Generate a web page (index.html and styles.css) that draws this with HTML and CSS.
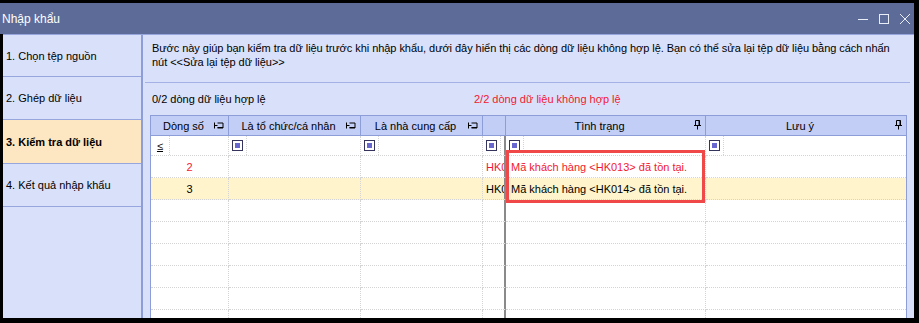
FILE: index.html
```html
<!DOCTYPE html>
<html lang="vi">
<head>
  <meta charset="UTF-8">
  <title>Nhập khẩu</title>
  <link rel="stylesheet" href="styles.css">
</head>
<body>
  <div class="window">
    <div class="titlebar">
      <span class="title">Nhập khẩu</span>
      <div class="controls">
        <svg width="12" height="12" viewBox="0 0 12 12"><path d="M1 6.5h10" stroke="#e9edf7" stroke-width="1"/></svg>
        <svg width="12" height="12" viewBox="0 0 12 12"><rect x="1.5" y="1.5" width="9" height="9" fill="none" stroke="#e9edf7" stroke-width="1"/></svg>
        <svg width="12" height="12" viewBox="0 0 12 12"><path d="M1 1l10 10M11 1L1 11" stroke="#e9edf7" stroke-width="1"/></svg>
      </div>
    </div>

    <div class="main">
      <div class="steps">
        <div class="step first">1. Chọn tệp nguồn</div>
        <div class="step">2. Ghép dữ liệu</div>
        <div class="step active">3. Kiểm tra dữ liệu</div>
        <div class="step">4. Kết quả nhập khẩu</div>
      </div>

      <div class="content">
        <p class="intro">Bước này giúp bạn kiểm tra dữ liệu trước khi nhập khẩu, dưới đây hiển thị các dòng dữ liệu không hợp lệ. Bạn có thể sửa lại tệp dữ liệu bằng cách nhấn nút &lt;&lt;Sửa lại tệp dữ liệu&gt;&gt;</p>
        <div class="divider"></div>
        <div class="counts">
          <span class="valid">0/2 dòng dữ liệu hợp lệ</span>
          <span class="invalid">2/2 dòng dữ liệu không hợp lệ</span>
        </div>

        <div class="grid">
          <div class="row head">
            <div class="hcell">Dòng số <svg class="pin" width="10" height="7" viewBox="0 0 10 7"><path d="M0.5 0.5v6M0.5 3.5h3M3.5 1h5.5v5h-5.5M3.5 5.5h5.5" fill="none" stroke="#000" stroke-width="1"/></svg></div>
            <div class="hcell">Là tổ chức/cá nhân <svg class="pin" width="10" height="7" viewBox="0 0 10 7"><path d="M0.5 0.5v6M0.5 3.5h3M3.5 1h5.5v5h-5.5M3.5 5.5h5.5" fill="none" stroke="#000" stroke-width="1"/></svg></div>
            <div class="hcell">Là nhà cung cấp <svg class="pin" width="10" height="7" viewBox="0 0 10 7"><path d="M0.5 0.5v6M0.5 3.5h3M3.5 1h5.5v5h-5.5M3.5 5.5h5.5" fill="none" stroke="#000" stroke-width="1"/></svg></div>
            <div class="hcell"></div>
            <div class="hcell">Tình trạng <svg class="pin" width="7" height="10" viewBox="0 0 7 10"><path d="M1.5 0.5h4v5M1.5 0.5v5M5 0.5v5M0 5.5h7M3.5 5.5v4" fill="none" stroke="#000" stroke-width="1"/></svg></div>
            <div class="hcell">Lưu ý <svg class="pin" width="7" height="10" viewBox="0 0 7 10"><path d="M1.5 0.5h4v5M1.5 0.5v5M5 0.5v5M0 5.5h7M3.5 5.5v4" fill="none" stroke="#000" stroke-width="1"/></svg></div>
          </div>

          <div class="row filter">
            <div class="cell"><span class="op le">≤</span></div>
            <div class="cell"><span class="op"><i class="chk"></i></span></div>
            <div class="cell"><span class="op"><i class="chk"></i></span></div>
            <div class="cell fixed"><span class="op"><i class="chk"></i></span></div>
            <div class="cell"><span class="op"><i class="chk"></i></span></div>
            <div class="cell"><span class="op"><i class="chk"></i></span></div>
          </div>

          <div class="row error">
            <div class="cell num">2</div>
            <div class="cell"></div>
            <div class="cell"></div>
            <div class="cell fixed clip">HK0</div>
            <div class="cell text">Mã khách hàng &lt;HK013&gt; đã tồn tại.</div>
            <div class="cell"></div>
          </div>

          <div class="row selected">
            <div class="cell num">3</div>
            <div class="cell"></div>
            <div class="cell"></div>
            <div class="cell fixed clip">HK0</div>
            <div class="cell text">Mã khách hàng &lt;HK014&gt; đã tồn tại.</div>
            <div class="cell"></div>
          </div>

          <div class="row"><div class="cell"></div><div class="cell"></div><div class="cell"></div><div class="cell fixed"></div><div class="cell"></div><div class="cell"></div></div>
          <div class="row"><div class="cell"></div><div class="cell"></div><div class="cell"></div><div class="cell fixed"></div><div class="cell"></div><div class="cell"></div></div>
          <div class="row"><div class="cell"></div><div class="cell"></div><div class="cell"></div><div class="cell fixed"></div><div class="cell"></div><div class="cell"></div></div>
          <div class="row"><div class="cell"></div><div class="cell"></div><div class="cell"></div><div class="cell fixed"></div><div class="cell"></div><div class="cell"></div></div>
          <div class="row"><div class="cell"></div><div class="cell"></div><div class="cell"></div><div class="cell fixed"></div><div class="cell"></div><div class="cell"></div></div>
          <div class="row"><div class="cell"></div><div class="cell"></div><div class="cell"></div><div class="cell fixed"></div><div class="cell"></div><div class="cell"></div></div>

          <div class="mark"></div>
        </div>
      </div>
    </div>
  </div>
</body>
</html>
```

FILE: styles.css
```css
body {
  margin: 0;
  background: #000;
  font-family: "Liberation Sans", Arial, sans-serif;
  font-size: 11px;
  color: #000;
}
.window {
  width: 914px;
  height: 315px;
  margin-top: 3px;
  overflow: hidden;
}
.titlebar {
  height: 31px;
  background: #5c6b98;
  display: flex;
  align-items: center;
  justify-content: space-between;
}
.title {
  color: #fff;
  font-size: 12px;
  padding-left: 2px;
}
.controls {
  display: flex;
  gap: 9px;
  padding-right: 3px;
}
.main {
  display: flex;
  height: 284px;
  margin-left: 3px;
  border-top: 1px solid #97a7dd;
  background: #d9e1fa;
}
.steps {
  width: 138px;
  border-right: 2px solid #8c9dd7;
}
.step {
  height: 42px;
  border-bottom: 1px solid #97a7dd;
  display: flex;
  align-items: center;
  padding-left: 3px;
}
.step.first {
  height: 41px;
}
.step.active {
  background: #fce7c2;
  font-weight: bold;
  height: 43px;
}
.content {
  flex: 1;
  overflow: hidden;
}
.intro {
  margin: 0;
  padding: 6px 14px 0 9px;
  height: 28px;
  line-height: 14px;
  letter-spacing: -0.05px;
}
.divider {
  height: 1px;
  margin: 13px 4px 0 2px;
  background: #a3b1e4;
}
.counts {
  height: 32px;
  display: flex;
  align-items: center;
  padding-left: 9px;
}
.valid {
  width: 322px;
}
.invalid {
  color: #f2182f;
}
.grid {
  position: relative;
  width: 755px;
  margin-left: 7px;
  height: 220px;
  border: 1px solid #8c9dd7;
  background: #fff;
}
.row {
  display: grid;
  grid-template-columns: 78px 132px 122px 23px 200px 200px;
  height: 22px;
}
.row.head {
  height: 20px;
  background: #c3cef7;
}
.hcell {
  position: relative;
  border-right: 1px solid #8c9dd7;
  border-bottom: 1px solid #8c9dd7;
  display: flex;
  align-items: center;
  justify-content: center;
  padding-right: 12px;
}
.hcell:last-child {
  border-right: none;
}
.pin {
  position: absolute;
  right: 4px;
  top: 6px;
}
.hcell:nth-child(5) .pin,
.hcell:nth-child(6) .pin {
  top: 4px;
}
.row.filter {
  height: 20px;
}
.cell {
  border-right: 1px dotted #d4d4d4;
  border-bottom: 1px dotted #d4d4d4;
  display: flex;
  align-items: center;
  overflow: hidden;
  white-space: nowrap;
}
.cell:last-child {
  border-right: none;
}
.cell.fixed {
  border-right: 2px solid #8a8a8a;
}
.op {
  height: 100%;
  width: 17px;
  border-right: 1px dotted #d4d4d4;
  display: flex;
  align-items: center;
  justify-content: center;
}
.op.le {
  width: 18px;
  text-decoration: underline;
}
.chk {
  width: 5px;
  height: 5px;
  border: 2px solid #fff;
  outline: 1px solid #34345c;
  background: #6767cf;
}
.cell.num {
  justify-content: center;
}
.cell.clip {
  padding-left: 3px;
}
.cell.text {
  padding-left: 5px;
}
.row.error .cell {
  color: #f2182f;
}
.row.selected {
  background: #fff4cc;
}
.mark {
  position: absolute;
  left: 355px;
  top: 34px;
  width: 193px;
  height: 47px;
  border: 3px solid #f04848;
}
```
